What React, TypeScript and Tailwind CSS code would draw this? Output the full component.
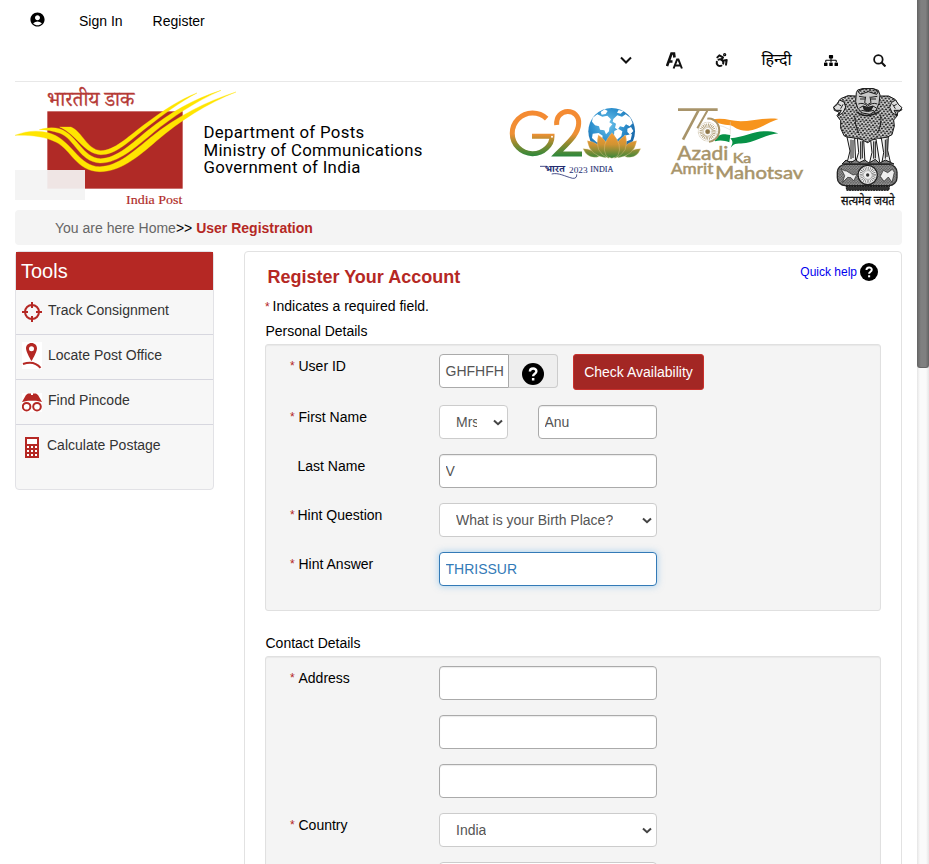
import type { ReactNode } from "react";
import { Accessibility } from "lucide-react";
import { MdAccountCircle } from "react-icons/md";
import { FaSitemap } from "react-icons/fa";

function IndiaPostLogo() {
  return (
    <svg className="block h-[125px] w-[235px] shrink-0" viewBox="45 9 705 375">
      <rect x="142" y="94" width="406" height="232" fill="#b02a26" />
      <text x="141" y="78" fontSize="60" textLength="262" lengthAdjust="spacingAndGlyphs" fill="#b53a36" stroke="#b53a36" strokeWidth=".9" fontFamily="'Noto Serif Devanagari','Noto Sans Devanagari',FreeSerif,serif">
        भारतीय डाक
      </text>
      <g fill="#ffe500" stroke="#ffe500" strokeWidth="1">
        <path d="M179 141H213C246 154 262 210 302 212C343 212 383 171 430 136C490 91 542 57 591 39C541 65 490 104 443 140C386 184 349 224 302 224C253 222 229 163 179 141Z" />
        <path d="M118 149C140 143 159 141 181 147C230 164 250 235 302 236C351 235 398 188 444 151C508 99 580 57 663 31C587 64 516 112 461 157C405 204 353 250 300 249C238 246 223 175 180 160C158 152 137 149 118 149Z" />
        <path d="M45 166C81 151 124 149 156 162C216 184 238 261 300 260C355 258 402 213 450 174C531 108 622 63 708 36C622 70 541 121 469 183C410 235 357 276 298 275C229 273 214 210 169 187C133 168 88 165 45 166Z" />
      </g>
      <rect x="45" y="270" width="210" height="90" fill="#f3f3f3" fillOpacity=".93" />
      <text x="378" y="371" fontSize="39" textLength="169" lengthAdjust="spacingAndGlyphs" fill="#b02a26" fontFamily="'Liberation Serif',serif" stroke="#b02a26" strokeWidth=".5">
        India Post
      </text>
    </svg>
  );
}

function G20Logo() {
  return (
    <svg className="block h-[95px] w-[150px] shrink-0" viewBox="0 0 450 285">
      <defs>
        <linearGradient id="tricolour" gradientUnits="userSpaceOnUse" x1="0" y1="48" x2="0" y2="186">
          <stop offset="0" stopColor="#f58a32" />
          <stop offset=".5" stopColor="#ef9035" />
          <stop offset=".72" stopColor="#8b8a2f" />
          <stop offset="1" stopColor="#26883d" />
        </linearGradient>
        <linearGradient id="petal" gradientUnits="userSpaceOnUse" x1="0" y1="115" x2="0" y2="190">
          <stop offset="0" stopColor="#f79a36" />
          <stop offset=".45" stopColor="#d09332" />
          <stop offset="1" stopColor="#35863a" />
        </linearGradient>
        <radialGradient id="globe" cx=".42" cy=".35" r=".65">
          <stop offset="0" stopColor="#6fc3ea" />
          <stop offset=".55" stopColor="#2c8fcd" />
          <stop offset="1" stopColor="#1763a5" />
        </radialGradient>
      </defs>
      <g fill="none" stroke="url(#tricolour)" strokeWidth="15">
        <path d="M140 71A61 61 0 1 0 140 159C150 150 156 138 156 124H96" />
        <path d="M170 90C166 37 239 37 236 86C235 119 202 145 171 177H246" />
      </g>
      <circle cx="156" cy="125" r="3" fill="#fff" />
      <circle cx="335" cy="109" r="70" fill="url(#globe)" />
      <g fill="#fff">
        <path d="M278 68L292 58L307 65L322 62L333 73L328 82L337 88L328 98L327 109L318 118L313 106L300 104L297 94L285 91L276 80ZM302 51L314 43L323 48L317 57L305 59ZM340 72L352 61L366 65L377 58L391 68L398 85L389 94L378 88L371 97L360 94L353 104L345 98L348 86L338 80ZM343 108L356 102L367 109L364 123L351 134L342 121ZM382 101L393 96L400 108L390 119L382 111ZM278 116L296 114L308 122L305 140L290 142L276 129ZM372 122L396 117L392 134L377 140ZM356 45L370 49L362 56L351 53Z" />
      </g>
      <g fill="url(#petal)" stroke="#f4d299" strokeWidth="1">
        <path d="M249 161Q278 160 297 185Q264 194 249 161ZM422 161Q393 160 375 185Q409 194 422 161Z" />
        <path d="M262 137Q301 140 318 188Q269 183 262 137ZM410 137Q373 140 353 188Q403 183 410 137Z" />
        <path d="M295 120Q335 145 327 190Q281 173 295 120ZM377 120Q336 145 344 190Q390 173 377 120Z" />
        <path d="M336 113Q302 150 318 181Q335 198 354 181Q369 150 336 113Z" />
      </g>
      <text x="135" y="232" fontSize="30" textLength="60" lengthAdjust="spacingAndGlyphs" fill="#252e72" fontFamily="'Noto Serif Devanagari','Noto Sans Devanagari',FreeSerif,serif" fontWeight="700">
        भारत
      </text>
      <path d="M120 214H141M155 237C176 232 194 244 218 250C228 251 231 245 230 238" fill="none" stroke="#252e72" strokeWidth="2.5" />
      <text x="207" y="234" fontSize="24" textLength="56" lengthAdjust="spacingAndGlyphs" fill="#252e72" fontFamily="'Liberation Serif',serif">2023</text>
      <text x="271" y="232" fontSize="23" textLength="69" lengthAdjust="spacingAndGlyphs" fill="#252e72" stroke="#252e72" strokeWidth=".4" fontFamily="'Liberation Serif',serif">INDIA</text>
    </svg>
  );
}

function AzadiLogo() {
  return (
    <svg className="block h-[95px] w-[150px] shrink-0" viewBox="0 0 450 285">
      <path d="M153 74C190 66 211 78 242 79C282 79 313 66 355 72C321 84 298 103 265 107C234 109 224 95 211 91C189 88 174 86 153 74Z" fill="#f7941d" />
      <path d="M211 80V118M168 94C187 88 199 101 211 104" fill="none" stroke="#d5ccbc" strokeWidth="1.5" />
      <path d="M165 131C184 113 192 118 211 120L208 142C195 137 180 134 165 139ZM211 130C254 126 288 105 324 109C337 110 346 113 355 115C317 120 287 139 258 144C235 147 224 142 212 158C216 147 222 142 211 130Z" fill="#079247" />
      <g fill="none" stroke="#a8946a">
        <path d="M54 44H173M116 45L69 134" strokeWidth="8" />
        <path d="M142 47L112 100M142 71C165 68 181 90 177 113C174 129 161 139 147 140" strokeWidth="6" />
        <circle cx="143" cy="110" r="28" fill="#fff" strokeWidth="2" strokeDasharray="2 2" />
        <circle cx="143" cy="110" r="18" strokeWidth="13" strokeDasharray="2 2.4" />
        <circle cx="143" cy="110" r="7" fill="#8f7649" />
      </g>
      <g fill="#a8946a" stroke="#a8946a" strokeWidth="1.5" fontFamily="Lato,sans-serif">
        <text x="52" y="195" fontSize="56" textLength="153" lengthAdjust="spacingAndGlyphs">Azadi</text>
        <text x="218" y="205" fontSize="39" textLength="56" lengthAdjust="spacingAndGlyphs">Ka</text>
        <text x="33" y="237" fontSize="46" textLength="127" lengthAdjust="spacingAndGlyphs">Amrit</text>
        <text x="166" y="252" fontSize="52" textLength="264" lengthAdjust="spacingAndGlyphs">Mahotsav</text>
      </g>
    </svg>
  );
}

function StateEmblem() {
  return (
    <svg className="block h-[127px] w-[78px] shrink-0" viewBox="18 6 234 381">
      <defs>
        <pattern id="mane" width="11" height="13" patternUnits="userSpaceOnUse" patternTransform="rotate(7)">
          <rect width="11" height="13" fill="#0c0c0c" />
          <path d="M1 1Q5.5 10 10 1M-4.5 7.5Q0 16 4.5 7.5M6.5 7.5Q11 16 15.5 7.5" fill="none" stroke="#f2f2f2" strokeWidth="3" />
        </pattern>
        <pattern id="carving" width="8" height="8" patternUnits="userSpaceOnUse">
          <rect width="8" height="8" fill="#999" />
          <path d="M0 3L3 0M2 7Q6 1 8 6" stroke="#222" strokeWidth="2" fill="none" />
        </pattern>
      </defs>
      <g stroke="#171717" strokeWidth="3" strokeLinejoin="round">
        <path d="M92 48L69 47L47 56L37 70L26 81L28 91L43 97L36 107L47 122L47 145L57 167L79 177L100 174L128 188L152 174L178 176L201 164L208 138L206 120L217 107L218 97L231 89L219 72L210 58L191 48L164 48Z" fill="url(#mane)" />
        <path d="M43 60L57 66L62 81L54 98L40 107L49 91L32 91L26 82L38 72ZM212 60L200 67L194 82L202 99L216 106L207 91L225 91L231 83L220 73Z" fill="#ddd" />
        <path d="M94 38L98 30L112 26H145L160 31L165 45L162 70L153 91L135 103L112 99L98 84L92 65Z" fill="#c8c8c8" />
        <path d="M99 35L113 26L145 26L160 35L155 43L130 35L107 43Z" fill="url(#mane)" />
        <path d="M66 171L75 213L67 245H92L89 174ZM97 175L101 217L92 247H120L116 181ZM137 181L141 217L134 247H164L153 177ZM169 174L176 218L171 246H196L188 211L190 171Z" fill="#ededed" />
      </g>
      <g fill="none" stroke="#1c1c1c" strokeWidth="3">
        <path d="M102 49L121 52M137 52L157 49M105 57H120M138 57H153M122 50L119 68L128 74L138 68L135 50" />
        <path d="M100 72Q115 66 128 79Q141 66 157 72M103 84L114 78Q128 87 144 78L154 84M109 91Q128 98 147 91" />
        <path d="M114 79Q128 87 144 79L138 90Q129 94 118 90Z" fill="#222" />
        <path d="M40 73L48 77M215 73L207 77M54 73L47 86M203 73L211 86" />
        <path d="M78 179V237M84 180V234M107 184V238M112 183V235M146 184V236M151 184V235M181 179V236M186 176V231M89 107Q89 136 101 159M167 104Q171 139 156 160" />
        <path d="M94 95Q125 118 164 94" strokeWidth="4" />
      </g>
      <path d="M51 252L63 240L76 249L92 239L103 248L119 240L132 249L151 238L163 250L181 240L207 252Z" fill="url(#carving)" stroke="#1a1a1a" strokeWidth="3" />
      <rect x="37" y="253" width="179" height="64" rx="24" fill="url(#carving)" stroke="#252525" strokeWidth="4" />
      <path d="M48 265Q60 275 63 272L84 285L96 282L86 303L78 293L68 292L53 307L59 287ZM166 289L175 271L188 278L202 268L208 277L201 307L190 291L177 304Z" fill="#eee" stroke="#222" strokeWidth="2" />
      <circle cx="128" cy="285" r="29" fill="#eee" stroke="#222" strokeWidth="4" />
      <circle cx="128" cy="285" r="18" fill="none" stroke="#555" strokeWidth="13" strokeDasharray="1.4 3.3" />
      <circle cx="128" cy="285" r="5" fill="#333" />
      <path d="M63 319H194L191 331H65Z" fill="#333" stroke="#111" strokeWidth="3" strokeDasharray="6 2" />
      <text x="48" y="374" fontSize="37" textLength="161" lengthAdjust="spacingAndGlyphs" fill="#111" stroke="#111" strokeWidth="1" fontFamily="'Noto Sans Devanagari',FreeSans,sans-serif">सत्यमेव जयते</text>
    </svg>
  );
}

function HelpIcon({ className }: { className: string }) {
  return (
    <svg className={className} viewBox="0 0 22 22">
      <circle cx="11" cy="11" r="11" fill="#000" />
      <path d="M7.9 8.5C7.9 4.7 14.4 4.5 14.4 8.3C14.4 10.8 11.1 10.5 11.1 13.2" fill="none" stroke="#fff" strokeWidth="2.4" />
      <rect x="9.9" y="15" width="2.5" height="2.5" fill="#fff" />
    </svg>
  );
}

function SelectArrow() {
  return (
    <svg className="h-[7px] w-[10px] shrink-0" viewBox="0 0 10 7">
      <path d="M1 1.4L5 5.2L9 1.4" fill="none" stroke="#444" strokeWidth="2" />
    </svg>
  );
}

function Select({ value, small = false }: { value: string; small?: boolean }) {
  return (
    <div className={`flex h-[34px] shrink-0 items-center justify-between rounded border border-[#ccc] bg-white pl-4 pr-[4px] text-[#555] ${small ? "w-[69px]" : "w-[218px]"}`}>
      <span className={`block overflow-hidden whitespace-nowrap ${small ? "w-[21px]" : ""}`}>{value}</span>
      <SelectArrow />
    </div>
  );
}

function TextBox({ value = "", size = "wide", focused = false }: { value?: string; size?: "wide" | "small"; focused?: boolean }) {
  return (
    <input
      readOnly
      value={value}
      className={`block h-[34px] shrink-0 rounded border bg-white px-[5.5px] py-0 outline-none ${size === "wide" ? "w-[218px]" : "w-[119px]"} ${focused ? "border-[#337ab7] text-[#337ab7] shadow-[0_0_7px_rgba(80,165,230,.5)]" : "border-[#aaa] text-[#555] shadow-[inset_0_1px_1px_rgba(0,0,0,.08)]"}`}
    />
  );
}

function Row({ label, required = false, tight = false, children }: { label?: string; required?: boolean; tight?: boolean; children: ReactNode }) {
  return (
    <div className="mb-[15px] flex h-[34px] shrink-0">
      <div className="flex w-[149px] shrink-0 pt-[2px] leading-5">
        <span className={`shrink-0 text-[12px] text-[#b32424] ${tight || !required ? "w-[7.5px]" : "w-[8.5px]"}`}>{required ? "*" : ""}</span>
        <span>{label}</span>
      </div>
      {children}
    </div>
  );
}

const tools = [
  {
    label: "Track Consignment",
    icon: (
      <svg className="h-5 w-5" viewBox="0 0 20 20" fill="none" stroke="#b52824" strokeWidth="2">
        <circle cx="10" cy="10" r="7" />
        <path d="M10 0V6M10 14V20M0 10H6M14 10H20" />
      </svg>
    ),
  },
  {
    label: "Locate Post Office",
    icon: (
      <svg className="-mt-1 h-[27px] w-5 bg-white" viewBox="0 0 20 27">
        <path fillRule="evenodd" d="M9.5 1C6.3 1 4 3.3 4 6.4C4 10 9.5 19 9.5 19S15 10 15 6.4C15 3.3 12.7 1 9.5 1ZM9.5 4.2A2.5 2.5 0 1 1 9.5 9.2A2.5 2.5 0 0 1 9.5 4.2Z" fill="#b52824" />
        <path d="M1 22Q12 18 18.5 25.8" fill="none" stroke="#b52824" strokeWidth="2" />
      </svg>
    ),
  },
  {
    label: "Find Pincode",
    icon: (
      <svg className="h-[19px] w-5 bg-white" viewBox="0 0 20 19">
        <path d="M0 9L4 2L6 .5H9V2H11V.5H14L16 2L20 9L14 7.8H6Z" fill="#b52824" />
        <g fill="none" stroke="#b52824" strokeWidth="2"><circle cx="4.6" cy="13.7" r="3.8" /><circle cx="15" cy="13.7" r="3.8" /></g>
      </svg>
    ),
  },
  {
    label: "Calculate Postage",
    icon: (
      <svg className="ml-[3px] h-[21px] w-[14px]" viewBox="0 0 14 21">
        <path d="M0 0H14V21H0Z" fill="#b52824" />
        <path d="M2 2H12V7H2ZM2 9H4V11H2ZM6 9H8V11H6ZM10 9H12V11H10ZM2 13H4V15H2ZM6 13H8V15H6ZM10 13H12V15H10ZM2 17H4V19H2ZM6 17H8V19H6ZM10 17H12V19H10Z" fill="#fff" />
      </svg>
    ),
  },
];

function TopBars() {
  return (
    <>
      <div className="flex h-[42px] shrink-0 items-center pl-[15px]">
        <MdAccountCircle className="mb-1 h-[17px] w-[17px] -translate-x-px" />
        <a className="ml-[32px]">Sign In</a>
        <a className="ml-[30px]">Register</a>
      </div>
      <div className="flex h-[40px] shrink-0 items-center justify-end border-b border-[#e8e8e8] pb-[3px]">
        <div className="flex w-12 justify-center">
          <svg className="h-2 w-3" viewBox="0 0 12 8"><path d="M1 1.5L6 6.5L11 1.5" fill="none" stroke="#111" strokeWidth="2" /></svg>
        </div>
        <div className="flex w-12 justify-center">
          <svg className="h-[17px] w-[17px]" viewBox="0 0 17 17" fill="none" stroke="#111">
            <path d="M1 14L5.5 1.5H8L8.5 5.5M3 9.5H6.5" strokeWidth="2.6" />
            <path d="M7.6 16.5L11.1 7.5H12.4L15.9 16.5M9.2 13.6H14.3" strokeWidth="2" />
          </svg>
        </div>
        <div className="flex w-12 justify-center"><Accessibility className="h-4 w-4" strokeWidth={3} color="#111" /></div>
        <span className="w-[61px] whitespace-nowrap pb-px text-center text-[16px] leading-5">हिन्दी</span>
        <div className="flex w-12 justify-center"><FaSitemap className="h-[13px] w-[14px]" /></div>
        <div className="-mr-px flex w-12 justify-center">
          <svg className="h-[13px] w-[13px]" viewBox="0 0 14 14" fill="none" stroke="#111" strokeWidth="1.9"><circle cx="5.8" cy="5.8" r="4.6" /><path d="M9 9L13.4 13.4" strokeWidth="2.3" /></svg>
        </div>
      </div>
    </>
  );
}

export default function App() {
  return (
    <div className="flex h-[864px] w-[929px] overflow-hidden bg-white font-['Liberation_Sans','Noto_Sans_Devanagari',FreeSans,sans-serif] text-[14px] leading-5 text-black">
      <main className="flex w-[917px] shrink-0 flex-col pl-[15px] pr-[15px]">
        <TopBars />
        <div className="flex h-[128px] shrink-0">
          <div className="w-[188.5px] shrink-0 overflow-visible pt-px"><IndiaPostLogo /></div>
          <div className="w-[305.5px] shrink-0 pt-[42px] font-[Roboto,sans-serif] text-[16.8px] leading-[17.6px] tracking-[.31px]">
            <p>Department of Posts</p><p>Ministry of Communications</p><p>Government of India</p>
          </div>
          <div className="-ml-[9px] w-[160px] shrink-0 pt-[13px]"><G20Logo /></div>
          <div className="w-[171px] shrink-0 pt-[13px]"><AzadiLogo /></div>
          <StateEmblem />
        </div>
        <nav className="mb-1.5 h-[35px] shrink-0 rounded bg-[#f4f4f4] pl-10 pt-2">
          <span className="text-[#666]">You are here Home</span>&gt;&gt; <b className="text-[#b52824]">User Registration</b>
        </nav>
        <div className="flex gap-[30px]">
          <aside className="h-[239px] w-[199px] shrink-0 rounded border border-[#e2e2e6] bg-[#f7f7f7]">
            <h2 className="h-[38px] bg-[#b52824] pl-[5px] pt-[9px] text-[20px] leading-5 text-white">Tools</h2>
            {tools.map((tool, index) => (
              <div key={tool.label} className={`flex h-[45px] pl-[6px] text-[#333] ${index < 3 ? "border-b border-[#d7d7df]" : ""}`}>
                <div className="flex w-[26px] items-center">{tool.icon}</div>
                <span className={`pt-[10px] ${index === 3 ? "-ml-px" : ""}`}>{tool.label}</span>
              </div>
            ))}
          </aside>
          <section className="flex h-[720px] w-[658px] shrink-0 flex-col rounded border border-[#e2e2e2] px-5 pt-[13px]">
            <div className="flex justify-between">
              <h1 className="pl-[2.5px] pt-[2px] text-[18px] font-bold leading-5 text-[#b52824]">Register Your Account</h1>
              <a className="flex h-5 items-center pr-[3px] text-[12px] text-[#0000ee]"><span className="mt-[-6px]">Quick help</span><HelpIcon className="mb-[6px] ml-[3px] h-[18px] w-[18px]" /></a>
            </div>
            <p className="mt-[9px]"><span className="text-[12px] text-[#b32424]">*</span> <span className="-ml-px">Indicates a required field.</span></p>
            <h3 className="mt-1 pl-[.5px]">Personal Details</h3>
            <div className="mt-[3px] flex h-[267px] shrink-0 flex-col rounded-[3px] border border-[#e0e0e0] bg-[#f4f4f4] pl-6 pt-[9px] shadow-[inset_0_1px_1px_rgba(0,0,0,.05)]">
              <div className="mb-0.5">
                <Row label="User ID" required>
                  <div className="flex h-[34px] w-[119px] shrink-0">
                    <div className="w-[70px] overflow-hidden rounded-l border border-[#aaa] bg-white pl-[5.5px] pt-[6px] text-[#555]">GHFHFH</div>
                    <div className="flex flex-1 items-end justify-center rounded-r border border-l-0 border-[#ccc] bg-[#eee] pb-[2px]"><HelpIcon className="h-[22px] w-[22px]" /></div>
                  </div>
                  <button className="ml-[15px] h-9 w-[131px] shrink-0 rounded-[3px] border border-[#c9302c] bg-[#a32724] text-white">Check Availability</button>
                </Row>
              </div>
              <Row label="First Name" required><Select value="Mrs" small /><div className="ml-[30px]"><TextBox value="Anu" size="small" /></div></Row>
              <Row label="Last Name"><TextBox value="V" /></Row>
              <Row label="Hint Question" required tight><Select value="What is your Birth Place?" /></Row>
              <Row label="Hint Answer" required><TextBox value="THRISSUR" focused /></Row>
            </div>
            <h3 className="mt-[22px] pl-[.5px]">Contact Details</h3>
            <div className="mt-[3px] flex h-[250px] shrink-0 flex-col rounded-[3px] border border-[#e0e0e0] bg-[#f4f4f4] pl-6 pt-[9px] shadow-[inset_0_1px_1px_rgba(0,0,0,.05)]">
              <Row label="Address" required><TextBox /></Row>
              <Row><TextBox /></Row>
              <Row><TextBox /></Row>
              <Row label="Country" required><Select value="India" /></Row>
              <Row><Select value="" /></Row>
            </div>
          </section>
        </div>
      </main>
      <div className="h-full w-3 bg-[linear-gradient(90deg,#e5e5e5,#fafafa_25%,#fafafa_75%,#e5e5e5)]">
        <div className="h-[368px] rounded-b-[3px] border-x border-b border-[#666] bg-[linear-gradient(90deg,#6c6c6c,#808080_30%,#808080_75%,#6c6c6c)]" />
      </div>
    </div>
  );
}
